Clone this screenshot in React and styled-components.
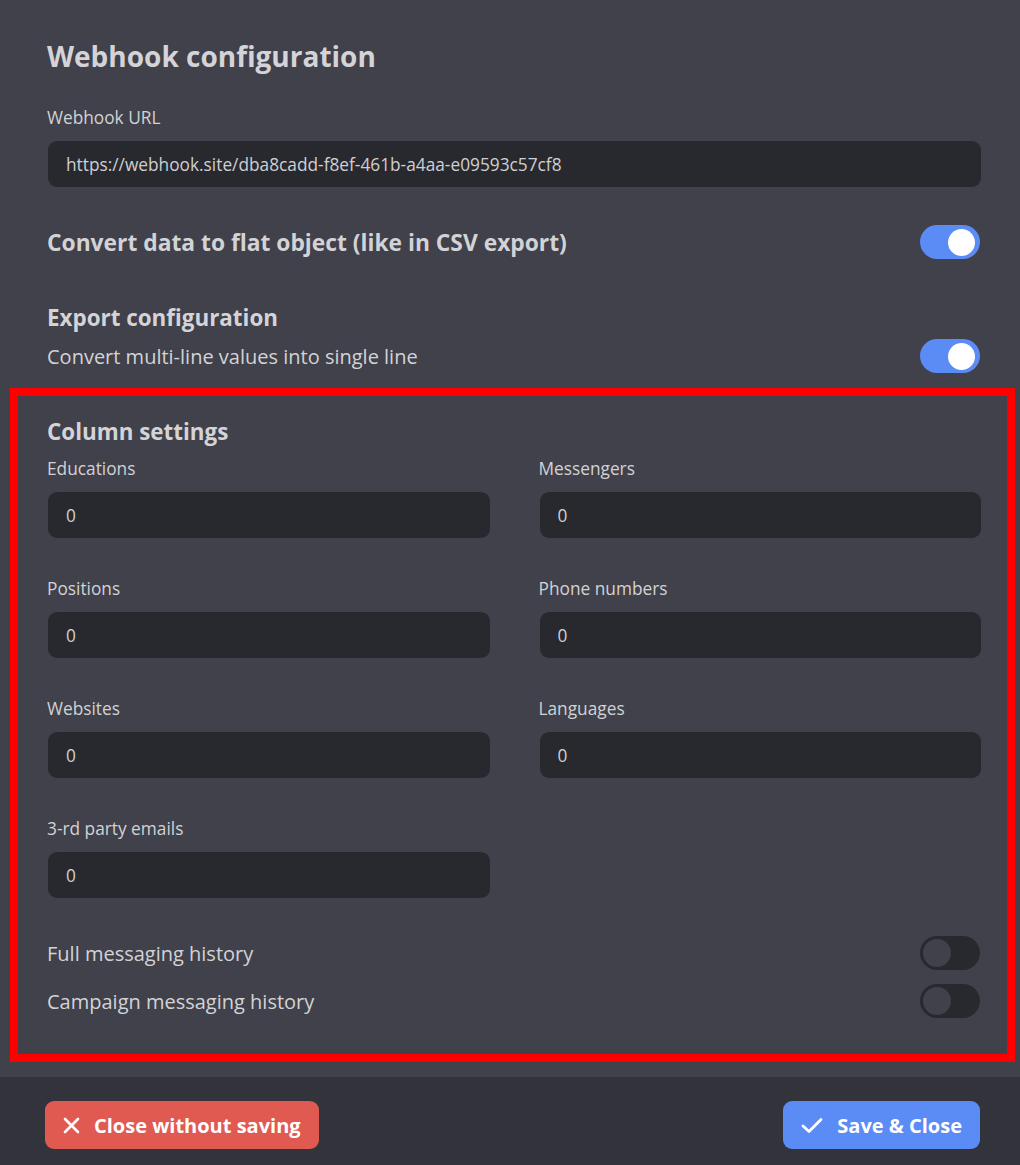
import React, { useState } from 'react';
import styled, { createGlobalStyle } from 'styled-components';

const GlobalStyle = createGlobalStyle`
  html, body {
    margin: 0;
    padding: 0;
    background: #33343b;
  }
  body {
    font-family: "Open Sans", Lato, "Liberation Sans", sans-serif;
  }
  * { box-sizing: border-box; }
`;

const Page = styled.div`
  width: 1020px;
  min-height: 1165px;
  display: flex;
  flex-direction: column;
  background: #40414a;
  color: #d6d6d9;
`;

const Content = styled.div`
  padding: 39px 40px 0 47px;
  display: flex;
  flex-direction: column;
`;

const Title = styled.h1`
  margin: 0;
  font-size: 28px;
  line-height: 34px;
  font-weight: 700;
  color: #d4d4d8;
`;

const SubTitle = styled.h2`
  margin: ${(p) => p.$mt || 0}px 0 0;
  font-size: 22.4px;
  line-height: 28px;
  font-weight: 700;
  color: #d4d4d8;
`;

const Label = styled.label`
  display: block;
  font-size: 17.3px;
  line-height: 20px;
  color: #d2d2d5;
  margin: ${(p) => p.$mt || 0}px 0 13px;
`;

const Input = styled.input`
  display: block;
  width: 100%;
  height: 46px;
  margin-left: 1px;
  border: none;
  outline: none;
  border-radius: 9px;
  background: #28292e;
  color: #cfcfd2;
  padding: 0 18px;
  font-family: inherit;
  font-size: 17.3px;
`;

const ToggleRow = styled.div`
  display: flex;
  align-items: center;
  justify-content: space-between;
  height: 34px;
  margin-top: ${(p) => p.$mt || 0}px;
`;

const RowText = styled.span`
  font-size: ${(p) => (p.$bold ? 22.8 : 20)}px;
  font-weight: ${(p) => (p.$bold ? 700 : 400)};
  color: #d3d3d6;
`;

const Track = styled.button`
  position: relative;
  width: 60px;
  height: 34px;
  border: none;
  padding: 0;
  border-radius: 17px;
  cursor: pointer;
  background: ${(p) => (p.$on ? '#5b8bf4' : '#28292e')};
`;

const Knob = styled.span`
  position: absolute;
  top: ${(p) => (p.$on ? 4 : 3)}px;
  left: ${(p) => (p.$on ? 28 : 3)}px;
  width: ${(p) => (p.$on ? 27 : 28)}px;
  height: ${(p) => (p.$on ? 27 : 28)}px;
  border-radius: 50%;
  background: ${(p) => (p.$on ? '#ffffff' : '#40414a')};
`;

const Highlight = styled.section`
  margin: 15px 5px 0 10px;
  border: 8px solid #ff0000;
  padding: 22px 27px 36px 29px;
`;

const Grid = styled.div`
  display: grid;
  grid-template-columns: 1fr 1fr;
  column-gap: 50px;
  row-gap: 41px;
  margin-top: 13px;
`;

const Field = styled.div``;

const Footer = styled.footer`
  margin-top: 15px;
  flex: 1;
  background: #33343b;
  padding: 24px 40px 0 45px;
  display: flex;
  justify-content: space-between;
  align-items: flex-start;
`;

const Button = styled.button`
  display: flex;
  align-items: center;
  gap: 14px;
  height: 48px;
  padding: 0 18px;
  border: none;
  border-radius: 9px;
  background: ${(p) => p.$bg};
  color: #ffffff;
  font-family: inherit;
  font-size: 20px;
  font-weight: 700;
  cursor: pointer;
`;

function Toggle({ initial }) {
  const [on, setOn] = useState(initial);
  return (
    <Track $on={on} onClick={() => setOn(!on)}>
      <Knob $on={on} />
    </Track>
  );
}

const XIcon = () => (
  <svg width="17" height="17" viewBox="0 0 17 17">
    <path d="M2 2 L15 15 M15 2 L2 15" stroke="#fff" strokeWidth="2.6" strokeLinecap="round" />
  </svg>
);

const CheckIcon = () => (
  <svg width="22" height="17" viewBox="0 0 22 17">
    <path d="M2 9 L8 14.5 L20 2.5" stroke="#fff" strokeWidth="2.8" fill="none" strokeLinecap="round" strokeLinejoin="round" />
  </svg>
);

const columns = [
  'Educations',
  'Messengers',
  'Positions',
  'Phone numbers',
  'Websites',
  'Languages',
  '3-rd party emails',
];

export default function App() {
  return (
    <>
      <GlobalStyle />
      <Page>
        <Content>
          <Title>Webhook configuration</Title>
          <Label $mt={35}>Webhook URL</Label>
          <Input defaultValue="https://webhook.site/dba8cadd-f8ef-461b-a4aa-e09593c57cf8" />
          <ToggleRow $mt={38}>
            <RowText $bold>Convert data to flat object (like in CSV export)</RowText>
            <Toggle initial={true} />
          </ToggleRow>
          <SubTitle $mt={45}>Export configuration</SubTitle>
          <ToggleRow $mt={7}>
            <RowText>Convert multi-line values into single line</RowText>
            <Toggle initial={true} />
          </ToggleRow>
        </Content>
        <Highlight>
          <SubTitle>Column settings</SubTitle>
          <Grid>
            {columns.map((c) => (
              <Field key={c}>
                <Label>{c}</Label>
                <Input defaultValue="0" />
              </Field>
            ))}
          </Grid>
          <ToggleRow $mt={38}>
            <RowText>Full messaging history</RowText>
            <Toggle initial={false} />
          </ToggleRow>
          <ToggleRow $mt={14}>
            <RowText>Campaign messaging history</RowText>
            <Toggle initial={false} />
          </ToggleRow>
        </Highlight>
        <Footer>
          <Button $bg="#e05a51">
            <XIcon />
            Close without saving
          </Button>
          <Button $bg="#5b8bf4">
            <CheckIcon />
            Save &amp; Close
          </Button>
        </Footer>
      </Page>
    </>
  );
}
